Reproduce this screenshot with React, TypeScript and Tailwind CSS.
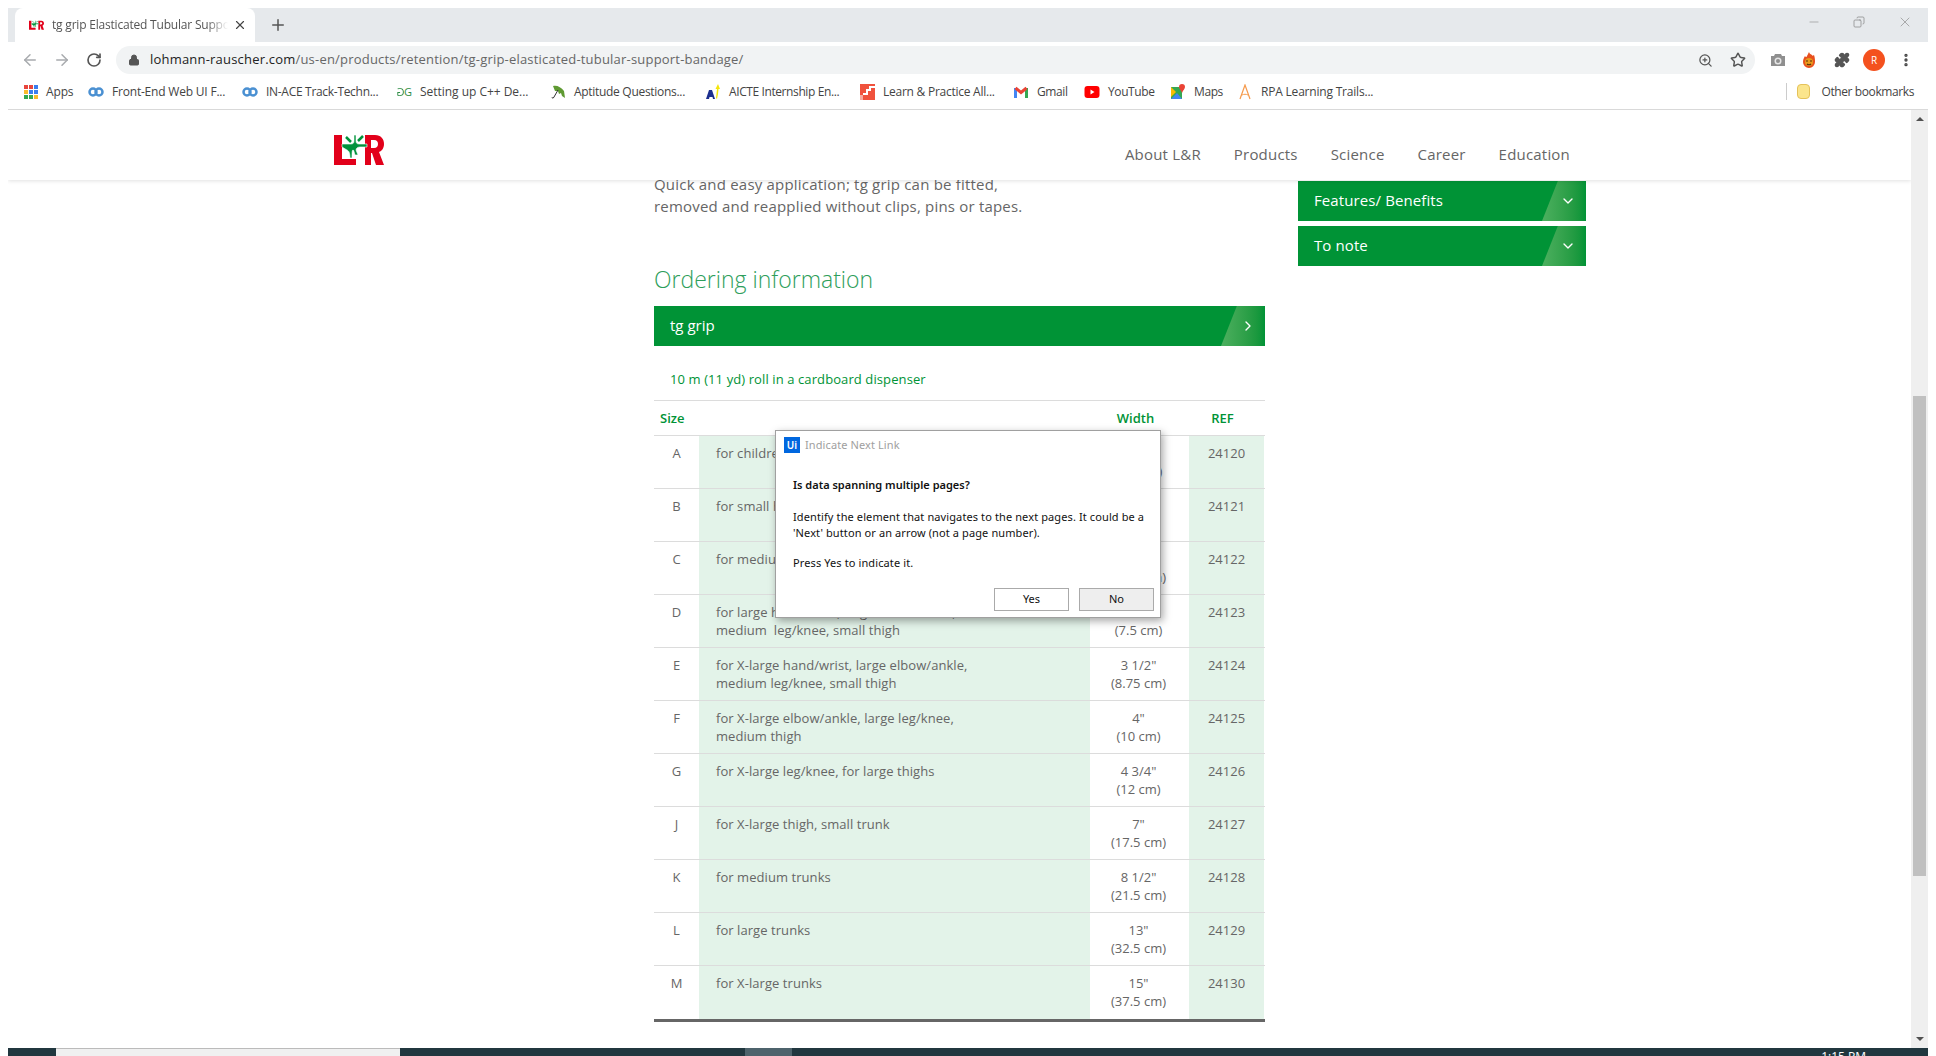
import { ArrowLeft, ArrowRight, ChevronDown, ChevronRight, Copy, Lock, Minus, MoreVertical, Plus, Puzzle, RotateCw, Star, X, ZoomIn } from "lucide-react"

const rows = [
    { size: "A", desc: ["for children's hand/wrist"], width: ["1 3/4\"", "(4.5 cm)"], ref: "24120" },
    { size: "B", desc: ["for small hand/wrist"], width: ["2\"", "(5 cm)"], ref: "24121" },
    { size: "C", desc: ["for medium hand/wrist"], width: ["2 1/2\"", "(6.25 cm)"], ref: "24122" },
    { size: "D", desc: ["for large hand/wrist, large elbow/ankle,", "medium  leg/knee, small thigh"], width: ["3\"", "(7.5 cm)"], ref: "24123" },
    { size: "E", desc: ["for X-large hand/wrist, large elbow/ankle,", "medium leg/knee, small thigh"], width: ["3 1/2\"", "(8.75 cm)"], ref: "24124" },
    { size: "F", desc: ["for X-large elbow/ankle, large leg/knee,", "medium thigh"], width: ["4\"", "(10 cm)"], ref: "24125" },
    { size: "G", desc: ["for X-large leg/knee, for large thighs"], width: ["4 3/4\"", "(12 cm)"], ref: "24126" },
    { size: "J", desc: ["for X-large thigh, small trunk"], width: ["7\"", "(17.5 cm)"], ref: "24127" },
    { size: "K", desc: ["for medium trunks"], width: ["8 1/2\"", "(21.5 cm)"], ref: "24128" },
    { size: "L", desc: ["for large trunks"], width: ["13\"", "(32.5 cm)"], ref: "24129" },
    { size: "M", desc: ["for X-large trunks"], width: ["15\"", "(37.5 cm)"], ref: "24130" },
]

const LogoIcon = ({ className }: { className: string }) => (
    <svg viewBox="0 0 50 33" className={className}>
        <path d="M0 2h8v24h14v6H0z" fill="#e2001a" />
        <path d="M31 2h10c6 0 9 4 9 9 0 4-2 7-5 8l5 13h-8l-4-12h-1v12h-6zM37 7v8h3c3 0 4-2 4-4s-1-4-4-4z" fill="#e2001a" fillRule="evenodd" />
        <path d="M8 11h9c2 0 3-1 3-3V2h2v6c0 2 1 3 3 3h8v3h-7c-2 0-4 1-4 3l2 5h-3c-1-3-1-5-2-5-1 0-1 3-1 8h-2c0-5-1-7-3-8l-5-3z" fill="#00933b" stroke="#fff" strokeWidth="0.600" />
        <path d="M12 4l5 5M29 3l-5 5" stroke="#00933b" strokeWidth="2.500" />
    </svg>
)

const Slant = () => (
    <div className="absolute right-0 top-0 h-full w-[44px] bg-gradient-to-r from-[#4cb05f] to-[#009336] [clip-path:polygon(36%_0,100%_0,100%_100%,0_100%)]" />
)

const SideBar = ({ label }: { label: string }) => (
    <div className="relative flex h-[40px] items-center bg-[#009336] pb-[2px] pl-4 text-[15px] font-medium tracking-[0.1px] text-white">
        <span>{label}</span>
        <Slant />
        <ChevronDown className="absolute right-[10px] top-[12px] h-4 w-4 text-white" strokeWidth={2} />
    </div>
)

const Mark = ({ children, label, className }: { children: React.ReactNode; label: string; className: string }) => (
    <div className="flex items-center gap-2">
        <div className="flex h-4 w-4 shrink-0 items-center justify-center">{children}</div>
        <span className={`whitespace-nowrap text-[12px] text-[#444] ${className}`}>{label}</span>
    </div>
)

const Infinity = () => (
    <svg viewBox="0 0 16 16" className="h-4 w-4" fill="none" stroke="#4a90d2" strokeWidth="2.500">
        <circle cx="5" cy="8" r="3.500" />
        <circle cx="11" cy="8" r="3.500" />
    </svg>
)

const App = () => {
    return (
        <div className="relative flex h-[1056px] w-[1936px] flex-col overflow-hidden bg-white pl-2 pr-2 pt-2 font-['Open_Sans',sans-serif]">
            {/* tab strip */}
            <div className="flex h-[34px] shrink-0 items-end bg-[#e6e9ec] pl-[7px] pr-[15px]">
                <div className="flex h-[34px] w-[240px] items-center rounded-t-lg bg-white pl-[14px] pr-[8px]">
                    <LogoIcon className="h-[12px] w-[15px] shrink-0" />
                    <span className="ml-[8px] w-[176px] overflow-hidden whitespace-nowrap text-[12px] tracking-[-0.2px] text-[#555] [mask-image:linear-gradient(to_right,black_88%,transparent)]">tg grip Elasticated Tubular Support Bandage</span>
                    <X className="ml-auto h-[14px] w-[14px] text-[#444]" />
                </div>
                <Plus className="mb-[8px] ml-[14px] h-[18px] w-[18px] text-[#555]" />
                <div className="mb-[12px] ml-auto flex items-center gap-[32px] text-[#888]">
                    <Minus className="h-[14px] w-[14px]" strokeWidth={1} />
                    <Copy className="h-[12px] w-[12px] -scale-x-100" strokeWidth={1.500} />
                    <X className="h-[16px] w-[16px]" strokeWidth={1} />
                </div>
            </div>

            {/* toolbar */}
            <div className="flex h-[32px] shrink-0 items-center pl-[13px] pr-[6px] pt-[4px]">
                <ArrowLeft className="h-[18px] w-[18px] text-[#a8abae]" />
                <ArrowRight className="ml-[14px] h-[18px] w-[18px] text-[#a8abae]" />
                <RotateCw className="ml-[15px] h-[16px] w-[16px] text-[#555]" strokeWidth={2.500} />
                <div className="ml-[14px] flex h-[28px] w-[1639px] items-center rounded-full bg-[#f1f3f4] pl-[12px] pr-[9px]">
                    <Lock className="h-[12px] w-[12px] fill-[#555] text-[#555]" />
                    <span className="ml-[10px] whitespace-nowrap text-[13px] tracking-[0.2px] text-[#222]">lohmann-rauscher.com<span className="text-[#666]">/us-en/products/retention/tg-grip-elasticated-tubular-support-bandage/</span></span>
                    <ZoomIn className="ml-auto h-[15px] w-[15px] text-[#555]" />
                    <Star className="ml-[17px] h-[16px] w-[16px] text-[#555]" strokeWidth={2.200} />
                </div>
                <svg viewBox="0 0 16 16" className="ml-[15px] h-[16px] w-[16px]">
                    <path d="M1 4h3l1-2h6l1 2h3v10H1z" fill="#8f8f8f" />
                    <circle cx="8" cy="9" r="3.500" fill="#e6e6e6" />
                    <circle cx="8" cy="9" r="2" fill="#8f8f8f" />
                </svg>
                <svg viewBox="0 0 16 16" className="ml-[15px] h-[16px] w-[16px]">
                    <path d="M8 0c.5 2 2 2 3 3 0 1 1 1 2 0 1 3 1 5 1 7a6 6 0 0 1-12 0c0-3 1-4 2-6 .5 1 1 1 1.500 1C6 4 7 2 8 0z" fill="#e8501e" />
                    <circle cx="8" cy="10" r="4" fill="#e89a1c" />
                    <path d="M5 9h2M9 9h2M6 12c1 1 3 1 4 0" stroke="#5a2d0c" strokeWidth="1.200" fill="none" />
                </svg>
                <Puzzle className="ml-[17px] h-[16px] w-[16px] fill-[#555] text-[#555]" />
                <div className="ml-[13px] flex h-[22px] w-[22px] items-center justify-center rounded-full bg-[#f4511e] text-[10px] text-white">R</div>
                <MoreVertical className="ml-[13px] h-[16px] w-[16px] text-[#444]" strokeWidth={3} />
            </div>

            {/* bookmarks */}
            <div className="flex h-[36px] shrink-0 items-center border-b border-[#d9d9d9] pl-[15px] pr-[14px]">
                <div className="flex items-center gap-[17px]">
                    <Mark label="Apps" className="w-[25px] -ml-[1px] tracking-[-0.15px]">
                        <div className="grid h-[14px] w-[14px] grid-cols-3 gap-px">
                            <i className="bg-[#e8453c]" /><i className="bg-[#e8453c]" /><i className="bg-[#3b7ded]" />
                            <i className="bg-[#f9bb2d]" /><i className="bg-[#3b7ded]" /><i className="bg-[#3b7ded]" />
                            <i className="bg-[#34a853]" /><i className="bg-[#34a853]" /><i className="bg-[#f9bb2d]" />
                        </div>
                    </Mark>
                    <Mark label="Front-End Web UI F..." className="w-[113px] tracking-[-0.2px]"><Infinity /></Mark>
                    <Mark label="IN-ACE Track-Techn..." className="w-[113px] tracking-[-0.3px]"><Infinity /></Mark>
                    <Mark label="Setting up C++ De..." className="w-[113px] tracking-[-0.03px]">
                        <span className="flex text-[11px] font-normal leading-none tracking-[-1.5px] text-[#2f8d46]"><span className="-scale-x-100">G</span><span>G</span></span>
                    </Mark>
                    <Mark label="Aptitude Questions..." className="w-[114px] tracking-[-0.3px]">
                        <svg viewBox="0 0 16 16" className="h-4 w-4">
                            <path d="M3 2c4-1 8 1 11 5l1 7-3-2-1-3-2 1-1-3-3 0z" fill="#5f9a32" />
                            <path d="M8 6l-4 7c-1 2-2 1-2 0" stroke="#333" strokeWidth="1" fill="none" />
                        </svg>
                    </Mark>
                    <Mark label="AICTE Internship En..." className="w-[113px] tracking-[-0.4px]">
                        <svg viewBox="0 0 16 16" className="h-4 w-4">
                            <path d="M1 15l3-9h3l3 9H8l-.5-2h-3L4 15z" fill="#1c2f8f" />
                            <path d="M13 0l2 5h-1.500l-.5 5-1 5-1-1 1-9h-1.500z" fill="#f5e60a" />
                        </svg>
                    </Mark>
                    <Mark label="Learn & Practice All..." className="w-[113px] tracking-[-0.25px]">
                        <svg viewBox="0 0 16 16" className="h-4 w-4">
                            <rect x="1" y="0" width="15" height="16" fill="#f0523d" />
                            <path d="M4 10h4V6h3V3h5" stroke="#fff" strokeWidth="2" fill="none" />
                            <path d="M1 11h3v5H1z" fill="#fff" opacity="0.5" />
                        </svg>
                    </Mark>
                    <Mark label="Gmail" className="w-[30px] tracking-[-0.4px]">
                        <svg viewBox="0 0 16 16" className="h-4 w-4" fill="none" strokeWidth="3">
                            <path d="M2.500 14V4" stroke="#4285f4" />
                            <path d="M13.500 14V4" stroke="#34a853" />
                            <path d="M2.500 4L8 8.500 13.500 4" stroke="#ea4335" />
                        </svg>
                    </Mark>
                    <Mark label="YouTube" className="w-[45px] tracking-[-0.4px]">
                        <svg viewBox="0 0 16 16" className="h-4 w-4">
                            <rect x="0.500" y="2" width="15" height="12" rx="3" fill="#f00" />
                            <path d="M6.500 5.500v5l4-2.500z" fill="#fff" />
                        </svg>
                    </Mark>
                    <Mark label="Maps" className="w-[26px] tracking-[-0.4px]">
                        <svg viewBox="0 0 16 16" className="h-4 w-4">
                            <path d="M1 3h11v12H1z" fill="#34a853" />
                            <path d="M1 15l6-6 5 6z" fill="#4285f4" />
                            <path d="M1 3l5 5-5 5z" fill="#fbbc04" />
                            <path d="M12 0a3 3 0 0 1 3 3c0 2-2 3-3 6-1-3-3-4-3-6a3 3 0 0 1 3-3z" fill="#ea4335" />
                        </svg>
                    </Mark>
                    <Mark label="RPA Learning Trails..." className="w-[109px] tracking-[-0.2px]">
                        <svg viewBox="0 0 16 16" className="h-4 w-4" fill="none">
                            <path d="M3 15L8 1l5 14" stroke="#f59a4c" strokeWidth="1.200" />
                            <path d="M5 11c2-1 4-1 6 0" stroke="#f59a4c" strokeWidth="1" />
                        </svg>
                    </Mark>
                </div>
                <div className="ml-auto flex items-center">
                    <div className="mr-[10px] h-[17px] w-px bg-[#ccc]" />
                    <div className="mr-[11px] h-[15px] w-[13px] rounded-sm border border-[#e5c25a] bg-[#fbe58c]" />
                    <span className="whitespace-nowrap text-[12px] tracking-[-0.4px] text-[#444]">Other bookmarks</span>
                </div>
            </div>

            {/* page */}
            <div className="flex h-[938px] shrink-0">
                <div className="h-full flex-1 overflow-hidden">
                    <header className="relative z-10 flex h-[70px] items-center justify-between bg-white pl-[326px] pr-[341px] shadow-[0_1px_4px_rgba(0,0,0,0.12)]">
                        <LogoIcon className="mt-[8px] h-[33px] w-[50px]" />
                        <nav className="mt-[18px] flex gap-[33px] text-[15px] tracking-[0.2px] text-[#666]">
                            <span>About L&amp;R</span>
                            <span>Products</span>
                            <span>Science</span>
                            <span>Career</span>
                            <span>Education</span>
                        </nav>
                    </header>

                    <div className="-mt-[7px] flex pl-[646px]">
                        <main className="w-[611px]">
                            <p className="text-[15px] leading-[22px] tracking-[0.2px] text-[#666]">
                                Quick and easy application; tg grip can be fitted,<br />
                                removed and reapplied without clips, pins or tapes.
                            </p>
                            <h2 className="mt-[46px] text-[23px] font-light leading-[32px] text-[#2e9e5b]">Ordering information</h2>
                            <div className="relative mt-[11px] flex h-[40px] items-center bg-[#009336] pb-[2px] pl-4 text-[15px] font-medium text-white">
                                <span>tg grip</span>
                                <Slant />
                                <ChevronRight className="absolute right-[9px] top-[12px] h-4 w-4 text-white" strokeWidth={2} />
                            </div>
                            <p className="flex h-[55px] items-center border-b border-[#dcdcdc] pl-4 pt-[14px] text-[13px] tracking-[0.1px] text-[#009336]">10 m (11 yd) roll in a cardboard dispenser</p>
                            <div className="grid h-[35px] grid-cols-[45px_391px_99px_75px] items-center border-b border-[#dcdcdc] pt-[2px] text-[13px] font-semibold text-[#009336]">
                                <span className="pl-[6px]">Size</span>
                                <span />
                                <span className="pr-[8px] text-center">Width</span>
                                <span className="pr-[8px] text-center">REF</span>
                            </div>
                            <div className="border-b-[3px] border-[#666]">
                                {rows.map((r, i) => (
                                    <div key={r.size} className={`grid h-[53px] grid-cols-[45px_391px_99px_75px] text-[13px] leading-[18px] text-[#666] ${i < rows.length - 1 ? "border-b border-[#dcdcdc]" : ""}`}>
                                        <div className="pt-[8px] text-center">{r.size}</div>
                                        <div className="bg-[#e3f3e9] pl-[17px] pt-[8px] tracking-[0.06px]">
                                            {r.desc.map((d) => (
                                                <div key={d} className="whitespace-pre">{d}</div>
                                            ))}
                                        </div>
                                        <div className="pr-[2px] pt-[8px] text-center">
                                            {r.width.map((w) => (
                                                <div key={w}>{w}</div>
                                            ))}
                                        </div>
                                        <div className="bg-[#e3f3e9] pt-[8px] text-center">{r.ref}</div>
                                    </div>
                                ))}
                            </div>
                        </main>
                        <aside className="ml-[33px] mt-[8px] flex w-[288px] flex-col gap-[5px]">
                            <SideBar label="Features/ Benefits" />
                            <SideBar label="To note" />
                        </aside>
                    </div>
                </div>

                {/* scrollbar */}
                <div className="flex h-full w-[17px] shrink-0 flex-col items-center bg-[#efefef] px-[2px]">
                    <div className="mt-[7px] h-0 w-0 border-x-[4px] border-b-[4px] border-x-transparent border-b-[#505050]" />
                    <div className="mt-[275px] h-[480px] w-full bg-[#c0c0c0]" />
                    <div className="mb-[7px] mt-auto h-0 w-0 border-x-[4px] border-t-[4px] border-x-transparent border-t-[#505050]" />
                </div>
            </div>

            {/* taskbar */}
            <div className="flex h-[8px] shrink-0 items-start bg-[#21373f] pl-[48px] pr-[4px]">
                <div className="h-[8px] w-[344px] border-t border-[#bbb] bg-[#f0f0f0]" />
                <div className="ml-[345px] h-[8px] w-[47px] bg-[#4e636c]" />
                <span className="ml-auto mr-[58px] mt-[1px] whitespace-nowrap text-[12px] leading-[16px] text-white">1:15 PM</span>
            </div>

            {/* uipath dialog */}
            <div className="absolute left-[775px] top-[430px] z-20 flex h-[188px] w-[386px] flex-col border border-[#a0a0a0] bg-white pl-[8px] pr-[7px] pt-[6px] font-['Noto_Sans',sans-serif] shadow-[2px_3px_8px_rgba(0,0,0,0.35)]">
                <div className="flex h-[16px] items-center gap-[5px]">
                    <div className="flex h-[16px] w-[16px] items-center justify-center bg-[#0067df] text-[10px] font-semibold text-white">Ui</div>
                    <span className="text-[11px] tracking-[0.1px] text-[#a0a0a0]">Indicate Next Link</span>
                </div>
                <div className="pl-[9px] pt-[24px] text-[11px] leading-[16px] tracking-[0.11px] text-[#111]">
                    <p className="font-semibold tracking-normal">Is data spanning multiple pages?</p>
                    <p className="mt-[16px]">Identify the element that navigates to the next pages. It could be a<br />'Next' button or an arrow (not a page number).</p>
                    <p className="mt-[14px]">Press Yes to indicate it.</p>
                </div>
                <div className="mr-[-1px] mt-[17px] flex justify-end gap-[10px] text-[11px] text-[#111]">
                    <div className="flex h-[23px] w-[75px] items-center justify-center border border-[#aaa] bg-white">Yes</div>
                    <div className="flex h-[23px] w-[75px] items-center justify-center border border-[#aaa] bg-[#eee]">No</div>
                </div>
            </div>
        </div>
    )
}

export default App
